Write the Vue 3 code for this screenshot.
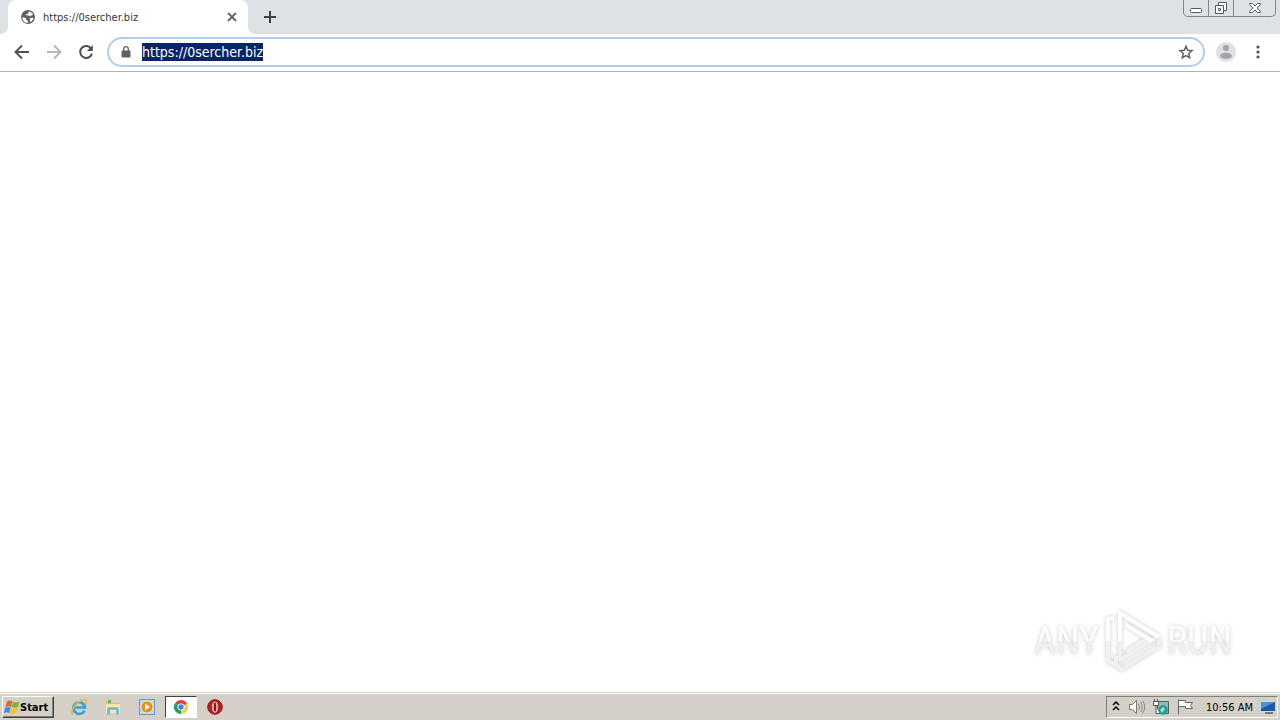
<template>
  <div class="desktop">
    <header class="tab-strip">
      <div class="tab-lead"></div>
      <div class="tab">
        <svg class="tab-icon" viewBox="0 0 16 16" aria-hidden="true">
          <circle cx="8" cy="8" r="7" fill="#5f6368" />
          <path d="M2.300 8.200 6 9v1.600l2.200 1.600-.8 1.700C4.500 13.700 2.300 11.300 2.300 8.200ZM8.500 2.400c2 .2 3.700 1.300 4.600 3L11.500 6.600 9 7.200 8 6 6.400 6.500 5.600 5.400l2.900-1ZM10 9h3.500c-.3 1.800-1.300 3.200-2.800 4l-.9-1.600Z" fill="#fff" />
        </svg>
        <span class="tab-title">{{ title }}</span>
        <button class="plain tab-close" aria-label="Close tab">
          <svg viewBox="0 0 16 16"><path d="m4 4 8 8M12 4l-8 8" fill="none" stroke="#5f6368" stroke-width="1.800" /></svg>
        </button>
      </div>
      <div class="tab-tail"></div>
      <button class="plain new-tab" aria-label="New tab">
        <svg viewBox="0 0 16 16"><path d="M8 2v12M2 8h12" fill="none" stroke="#3c4043" stroke-width="2" /></svg>
      </button>
      <div class="window-controls">
        <button class="win-btn" aria-label="Minimize">
          <svg viewBox="0 0 14 14"><rect x="1.500" y="7.500" width="11" height="4" rx="1" fill="#fff" stroke="#535666" /></svg>
        </button>
        <button class="win-btn" aria-label="Restore">
          <svg viewBox="0 0 14 14">
            <path d="M4.500 1.500h8v8h-8z" fill="#fff" stroke="#535666" />
            <path d="M1.500 4.500h8v8h-8z" fill="#fff" stroke="#535666" />
            <path d="M4.500 7.500h2v2h-2z" fill="#fff" stroke="#535666" />
          </svg>
        </button>
        <button class="win-btn wide" aria-label="Close">
          <svg viewBox="0 0 14 14"><path d="M1.500 2.500h3L7 5l2.500-2.500h3v1L9 7l3.500 3.500v1h-3L7 9l-2.500 2.500h-3v-1L5 7 1.500 3.500Z" fill="#fff" stroke="#535666" /></svg>
        </button>
      </div>
    </header>

    <nav class="toolbar" aria-label="Navigation">
      <button class="plain nav-btn" aria-label="Back">
        <svg viewBox="0 0 16 16"><path d="M15 8H2M8 1.500 1.500 8 8 14.500" fill="none" stroke="#4d5156" stroke-width="1.900" /></svg>
      </button>
      <button class="plain nav-btn" aria-label="Forward" disabled>
        <svg viewBox="0 0 16 16"><path d="M1 8h13M8 1.500 14.500 8 8 14.500" fill="none" stroke="#b4b6b9" stroke-width="1.900" /></svg>
      </button>
      <button class="plain nav-btn" aria-label="Reload">
        <svg viewBox="0 0 16 16">
          <path d="M13.300 4.800A6 6 0 1 0 14 9.500" fill="none" stroke="#4d5156" stroke-width="2" />
          <path d="M14.800 1v6H8.800Z" fill="#4d5156" />
        </svg>
      </button>
      <div class="omnibox">
        <svg class="lock" viewBox="0 0 16 16" aria-hidden="true">
          <rect x="3.500" y="6.500" width="9" height="7" rx="1" fill="#5f6368" />
          <path d="M5.700 7V5a2.300 2.300 0 0 1 4.600 0V7" fill="none" stroke="#5f6368" stroke-width="1.300" />
        </svg>
        <input ref="address" v-model="url" class="address" type="text" aria-label="Address" spellcheck="false" />
        <button class="plain star" aria-label="Bookmark this page">
          <svg viewBox="0 0 16 16"><path d="m8 2.200 1.700 4 4.300.4-3.300 2.900 1 4.200L8 11.500l-3.700 2.200 1-4.200L2 6.600l4.300-.4Z" fill="none" stroke="#5f6368" stroke-width="1.500" /></svg>
        </button>
      </div>
      <button class="plain avatar" aria-label="Profile">
        <svg viewBox="0 0 20 20">
          <circle cx="10" cy="10" r="10" fill="#dfe0e2" />
          <circle cx="10" cy="6" r="3" fill="#a2a5a8" />
          <ellipse cx="10" cy="13.800" rx="6" ry="3" fill="#a2a5a8" />
        </svg>
      </button>
      <button class="plain menu" aria-label="Menu">
        <svg viewBox="0 0 16 16" fill="#4d5156">
          <circle cx="8" cy="3" r="1.600" /><circle cx="8" cy="8" r="1.600" /><circle cx="8" cy="13" r="1.600" />
        </svg>
      </button>
    </nav>

    <main class="page">
      <div class="watermark">
        <span>ANY</span>
        <svg viewBox="0 0 58 62" aria-hidden="true">
          <g class="lower">
            <path d="M4 28v23l8 4v-9M16 28v22l36-22" />
            <path d="M12 55l6 4 37-23v-7M22 42l22-14" />
          </g>
          <g class="upper">
            <path d="M10 8 4 9v22" />
            <path d="M16 31V3l39 24M22 15l26 16" />
          </g>
        </svg>
        <span>RUN</span>
      </div>
    </main>

    <footer class="taskbar">
      <button class="start">
        <svg viewBox="1 1 16 15" aria-hidden="true">
          <path d="M4 3c2-1.500 3.500-1 5.500-.2L8 8.400C6 7.400 4.500 7.400 2.500 8.400Z" fill="#e8622b" />
          <path d="M10.200 3.200c2 1 4 .8 6.300-.2L15 8.600c-2 1-4.200 1-6.300 0Z" fill="#79b82e" />
          <path d="M2.200 9.200c2-1 3.500-1 5.500 0l-1.500 5.400c-1.700-1-3.300-1-5.400 0Z" fill="#3f8ddd" />
          <path d="M8.400 9.400c2 1 4.200 1 6.300 0l-1.500 5.400c-2 1-4.300 1-6.300 0Z" fill="#f7bd25" />
        </svg>
        <span>Start</span>
      </button>
      <div class="quick-launch">
        <button class="plain task" aria-label="Internet Explorer">
          <svg viewBox="0 0 18 18">
            <path d="M14.500 12.500A5.800 5.800 0 1 1 15 9.500H5" fill="none" stroke="#35a4df" stroke-width="2.700" />
            <path d="M3 16.500C-1.500 14 8.500 1.500 14.500 1.500c2.500 0 2.300 2.500 1.200 4.500" fill="none" stroke="#e5b93a" stroke-width="1.500" />
          </svg>
        </button>
        <button class="plain task" aria-label="Windows Explorer">
          <svg viewBox="0 0 18 18">
            <path d="M2 3h5l1 2h8v10H2Z" fill="#e4c25b" />
            <path d="M4 2h3v3H4z" fill="#66b96a" />
            <path d="M2 6h14v9H2Z" fill="#f8e7a0" />
            <path d="M4.500 16.500v-5q0-1 1-1h7q1 0 1 1v5" fill="none" stroke="#6ab3df" stroke-width="2.600" />
          </svg>
        </button>
        <button class="plain task" aria-label="Media Player">
          <svg viewBox="0 0 18 18">
            <rect x="1.500" y="1.500" width="15" height="15" fill="#b8d8f0" stroke="#5e9ccb" />
            <circle cx="9" cy="9" r="6" fill="#f28a18" stroke="#fff" stroke-width=".6" />
            <path d="m7 5.500 5 3.500-5 3.500Z" fill="#fff" />
          </svg>
        </button>
        <button class="plain task active" aria-label="Chrome">
          <svg viewBox="0 0 18 18">
            <path d="M9 9 2.900 5.500A7 7 0 0 1 15.100 5.500Z" fill="#dc4437" />
            <path d="M9 9V16A7 7 0 0 1 2.900 5.500Z" fill="#1a9f5b" />
            <path d="M9 9 15.100 5.500A7 7 0 0 1 9 16Z" fill="#fccd42" />
            <circle cx="9" cy="9" r="3.600" fill="#fff" />
            <circle cx="9" cy="9" r="2.700" fill="#4284f1" />
          </svg>
        </button>
        <button class="plain task" aria-label="Opera">
          <svg viewBox="0 0 18 18">
            <circle cx="9" cy="9" r="7.300" fill="#b81f1f" stroke="#8a1919" />
            <ellipse cx="9" cy="9" rx="2.800" ry="5.500" fill="#fff" />
            <ellipse cx="9" cy="9" rx="1.500" ry="4.800" fill="#8a1919" />
          </svg>
        </button>
      </div>
      <div class="tray">
        <button class="plain tray-btn narrow" aria-label="Show hidden icons">
          <svg viewBox="0 0 8 16"><path d="m1 6 3-3 3 3M1 11l3-3 3 3" fill="none" stroke="#000" stroke-width="1.500" /></svg>
        </button>
        <button class="plain tray-btn" aria-label="Volume">
          <svg viewBox="0 0 18 18">
            <path d="M1.500 6.500h3l4-4v13l-4-4h-3Z" fill="#fff" stroke="#77777a" />
            <path d="M10.500 6q2 3 0 6M12.500 4q3.500 5 0 10M14.500 2.500q4.500 6.500 0 13" fill="none" stroke="#858588" />
          </svg>
        </button>
        <button class="plain tray-btn" aria-label="Network">
          <svg viewBox="0 0 18 18">
            <path d="M5.500 3.500h11v12h-11z" fill="#91b9c2" stroke="#4b5e65" />
            <circle cx="11" cy="12" r="4.800" fill="#269a8d" />
            <path d="m8 12 3-3 2 2-3 4Z" fill="#9ce0d3" />
            <path d="M2.500 1v3M5.500 1v3M1.500 3.500h5v4h-5zM4 7.500v8h3" fill="#fff" stroke="#555" />
          </svg>
        </button>
        <button class="plain tray-btn" aria-label="Action Center">
          <svg viewBox="0 0 18 18"><path d="M2.500 16.500V1.500M2.500 2.500h7v2h7l-2 3 2 3h-7v-2h-7" fill="#fff" stroke="#66666a" /></svg>
        </button>
        <time class="clock">10:56 AM</time>
        <button class="plain tray-btn show-desktop" aria-label="Show desktop">
          <svg viewBox="0 0 18 18">
            <path d="M1.500 3.500h15v10h-15Z" fill="#1e57a5" stroke="#c5d8ec" />
            <path d="M2 4h14L2 11Z" fill="#4c91d9" />
            <path d="M6 15h8" stroke="#777" stroke-width="2" />
          </svg>
        </button>
      </div>
    </footer>
  </div>
</template>

<script setup>
import { onMounted, ref } from "vue";

const title = "https://0sercher.biz";
const url = ref(title);
const address = ref(null);

onMounted(() => {
  address.value.focus();
  address.value.select();
});
</script>

<style>
body {
  margin: 0;
}
</style>

<style scoped>
.desktop {
  display: flex;
  flex-direction: column;
  min-height: 100vh;
  background: #fff;
  font-family: Tahoma, "DejaVu Sans Condensed", "DejaVu Sans", sans-serif;
  font-size: 11px;
  color: #000;
}
svg {
  display: block;
  width: 16px;
  height: 16px;
}
button {
  font-family: inherit;
}
.plain {
  display: flex;
  align-items: center;
  justify-content: center;
  padding: 0;
  border: 0;
  background: none;
}
.tab-strip {
  display: flex;
  height: 34px;
  background: #dee1e6;
}
.tab-lead,
.tab-tail {
  width: 8px;
  background: radial-gradient(circle at 0 26px, transparent 8px, #fff 8px);
  clip-path: inset(26px 0 0 0);
}
.tab-tail {
  background: radial-gradient(circle at 8px 26px, transparent 8px, #fff 8px);
}
.tab {
  display: flex;
  align-items: center;
  box-sizing: border-box;
  width: 240px;
  padding: 0 8px 0 12px;
  border-radius: 8px 8px 0 0;
  background: #fff;
}
.tab-title {
  flex: 1;
  margin-left: 7px;
  color: #33373b;
}
.new-tab {
  width: 28px;
}
.window-controls {
  display: flex;
  box-sizing: border-box;
  height: 17px;
  margin: 0 4px 0 auto;
  border: 1px solid #83868f;
  border-top: 0;
  border-radius: 0 0 5px 5px;
}
.win-btn {
  display: flex;
  align-items: center;
  justify-content: center;
  width: 25px;
  padding: 0;
  border: 0;
  border-right: 1px solid #83868f;
  background: none;
}
.win-btn svg {
  width: 14px;
  height: 14px;
}
.win-btn.wide {
  width: 41px;
  border-right: 0;
}
.toolbar {
  display: flex;
  align-items: center;
  box-sizing: border-box;
  height: 38px;
  padding: 0 14px 1px 6px;
  border-bottom: 1px solid #b0b3b6;
}
.nav-btn {
  width: 32px;
  height: 32px;
}
.omnibox {
  display: flex;
  flex: 1;
  align-items: center;
  box-sizing: border-box;
  height: 30px;
  margin: 0 11px 0 5px;
  padding: 0 9px;
  border: 2px solid #b3cbf0;
  border-radius: 15px;
}
.address {
  flex: 1;
  min-width: 0;
  height: 18px;
  margin: 0 8px;
  padding: 0;
  border: 0;
  outline: 0;
  background: none;
  color: #202124;
  font-family: inherit;
  font-size: 14px;
  line-height: 18px;
}
.address::selection {
  background: #0a246a;
  color: #fff;
}
.avatar,
.avatar svg {
  width: 20px;
  height: 20px;
}
.menu {
  width: 16px;
  height: 32px;
  margin-left: 14px;
}
.page {
  display: flex;
  flex: 1;
  align-items: flex-end;
  justify-content: flex-end;
  padding: 0 48px 20px 0;
}
.watermark {
  display: flex;
  align-items: center;
  gap: 5px;
  font-family: "Roboto Condensed", "Open Sans Condensed", "Liberation Sans", sans-serif;
  font-size: 38px;
  line-height: 48px;
  filter: drop-shadow(0 0 2px #ccc);
}
.watermark span {
  background: linear-gradient(#fff 50%, #f0f0f0 50%);
  background-clip: text;
  color: transparent;
}
.watermark svg {
  width: 58px;
  height: 62px;
  fill: none;
  stroke-width: 4;
  stroke-linejoin: round;
}
.upper {
  stroke: #fff;
}
.lower {
  stroke: #f0f0f0;
}
.taskbar {
  display: flex;
  align-items: center;
  box-sizing: border-box;
  height: 28px;
  padding: 3px 2px 2px;
  border-top: 1px solid #d4d0c8;
  background: #d4d0c8;
  box-shadow: inset 0 1px #fff;
}
.start {
  display: flex;
  align-items: center;
  box-sizing: border-box;
  width: 52px;
  height: 22px;
  padding: 0 1px;
  border: 1px solid;
  border-color: #fff #404040 #404040 #fff;
  background: #d4d0c8;
  box-shadow: inset -1px -1px #808080;
  font-size: 11px;
  font-weight: bold;
}
.start svg {
  flex: none;
}
.quick-launch {
  display: flex;
  margin-left: 8px;
}
.task {
  box-sizing: border-box;
  width: 34px;
  height: 22px;
}
.task svg,
.tray-btn svg {
  width: 18px;
  height: 18px;
}
.task.active {
  width: 32px;
  margin: 0 1px;
  border: 1px solid;
  border-color: #404040 #fff #fff #404040;
  background: #fff;
}
.tray {
  display: flex;
  align-items: center;
  box-sizing: border-box;
  height: 22px;
  margin-left: auto;
  border: 1px solid;
  border-color: #808080 #fff #fff #808080;
}
.tray-btn {
  width: 24px;
}
.tray-btn.narrow,
.tray-btn.show-desktop {
  width: 18px;
}
.tray-btn.narrow svg {
  width: 8px;
  height: 16px;
}
.clock {
  margin: 0 6px 0 9px;
}
</style>
